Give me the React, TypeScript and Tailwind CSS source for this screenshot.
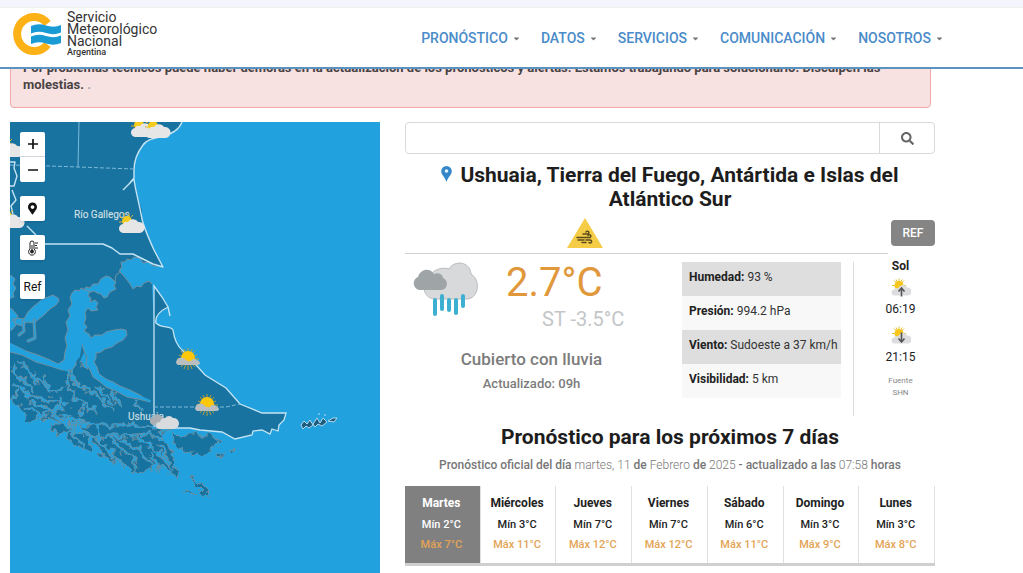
import type { FC, PropsWithChildren } from "react";
import { FaCaretDown, FaMapMarkerAlt, FaSearch } from "react-icons/fa";

type IconProps = { className?: string };
type Place = { x: number; y: number };

const menu = ["PRONÓSTICO", "DATOS", "SERVICIOS", "COMUNICACIÓN", "NOSOTROS"];

const conditions = [
  { label: "Humedad:", value: "93 %" },
  { label: "Presión:", value: "994.2 hPa" },
  { label: "Viento:", value: "Sudoeste a 37 km/h" },
  { label: "Visibilidad:", value: "5 km" },
];

const week = [
  { day: "Martes", min: 2, max: 7 },
  { day: "Miércoles", min: 3, max: 11 },
  { day: "Jueves", min: 7, max: 12 },
  { day: "Viernes", min: 7, max: 12 },
  { day: "Sábado", min: 6, max: 11 },
  { day: "Domingo", min: 3, max: 9 },
  { day: "Lunes", min: 3, max: 8 },
];

const App = () => (
  <div className="flex min-h-screen flex-col bg-white font-['Roboto','Liberation_Sans',sans-serif] text-[#222]">
    <SiteHeader />
    <main className="flex flex-1 flex-col pt-[46px] pr-[88px] pl-[10px]">
      <div
        role="alert"
        className="mr-1 rounded-sm border border-[#eda9a9] bg-[#f7e1e1] px-3 pt-3 pb-[14px] text-[13px] leading-[17px] font-bold text-[#4a4344]"
      >
        Por problemas técnicos puede haber demoras en la actualización de los
        pronósticos y alertas. Estamos trabajando para solucionarlo. Disculpen
        las molestias. <span className="text-gray-400">.</span>
      </div>
      <div className="mt-[14px] grid flex-1 grid-cols-[37fr_53fr] gap-[25px]">
        <MapPanel />
        <section>
          <SearchBar />
          <CurrentWeather />
          <Forecast />
        </section>
      </div>
    </main>
  </div>
);

const SiteHeader = () => (
  <header className="fixed inset-x-0 top-0 z-10 border-b-2 border-[#5b92bf] bg-white">
    <div className="h-2 border-b border-[#eef0ea] bg-[#f4f4fd]" />
    <div className="flex h-[59px] items-center justify-between pr-20 pl-[11px]">
      <a href="#inicio" className="flex items-center gap-[5px] pb-2">
        <Logo className="h-[44px] w-[51px]" />
        <span className="flex flex-col text-[14px] leading-[12px] text-[#333]">
          <span>Servicio</span>
          <span>Meteorológico</span>
          <span>Nacional</span>
          <span className="text-[9px] leading-[10px] font-medium">
            Argentina
          </span>
        </span>
      </a>
      <nav className="flex gap-[21px] pt-[2px]">
        {menu.map((item) => (
          <button
            key={item}
            className="flex items-center gap-[5px] text-[14px] font-medium text-[#4a8bc9]"
          >
            {item}
            <FaCaretDown className="h-[9px] w-[7px] text-[#777]" />
          </button>
        ))}
      </nav>
    </div>
  </header>
);

const SearchBar = () => (
  <form className="flex h-8 rounded-sm border border-[#d9d9d9]">
    <input
      type="search"
      aria-label="Buscar localidad"
      className="min-w-0 flex-1 px-3 text-sm outline-none"
    />
    <button
      type="button"
      aria-label="Buscar"
      className="flex w-[55px] items-center justify-center border-l border-[#d9d9d9] text-[#666]"
    >
      <FaSearch className="h-[13px] w-[13px]" />
    </button>
  </form>
);

const CurrentWeather = () => (
  <>
    <h1 className="mt-[9px] px-6 text-center text-[21px] leading-6 font-bold text-[#1d1d1d]">
      <MarkerIcon className="mr-2 mb-1 inline-block h-4 w-[11px]" />
      Ushuaia, Tierra del Fuego, Antártida e Islas del Atlántico Sur
    </h1>
    <div className="mt-[7px] flex gap-[3px]">
      <div className="h-9 flex-1 border-b border-[#d2d2d2] pr-[124px]">
        <WarningIcon className="mx-auto h-[30px] w-[36px]" />
      </div>
      <button className="mt-[2px] h-[26px] w-[44px] rounded-sm bg-[#858585] text-xs font-medium text-white">
        REF
      </button>
    </div>
    <div className="flex">
      <div className="flex-1 pt-2">
        <div className="flex pl-2">
          <RainIcon className="h-[56px] w-[66px]" />
          <div className="ml-[27px]">
            <p className="pt-px text-[40px] leading-[40px] text-[#e0983a]">
              2.7°C
            </p>
            <p className="pt-1 pl-9 text-[20px] leading-6 text-[#c3c6c8]">
              ST -3.5°C
            </p>
          </div>
        </div>
        <p className="mt-4 pr-6 text-center text-[17px] leading-6 font-medium text-[#7c7c7c]">
          Cubierto con lluvia
        </p>
        <p className="mt-[3px] pr-6 text-center text-[13px] leading-5 font-medium text-[#7c7c7c]">
          Actualizado: 09h
        </p>
      </div>
      <table className="mt-2 mr-3 block w-[159px] self-start text-xs">
        <tbody className="block">
          {conditions.map(({ label, value }) => (
            <tr
              key={label}
              className="flex h-[34px] gap-[3px] pt-[7px] pl-[7px] odd:bg-[#dedede] even:bg-[#f8f8f8]"
            >
              <th scope="row" className="font-bold">
                {label}
              </th>
              <td className="whitespace-nowrap text-[#333]">{value}</td>
            </tr>
          ))}
        </tbody>
      </table>
      <div className="mt-2 h-[154px] w-[82px] border-l border-[#dadada] pl-3 text-center text-xs">
        <div className="-mt-1 flex flex-col items-center">
          <strong className="leading-4">Sol</strong>
          <SunTimeIcon className="mt-1 h-[21px] w-[20px]" up />
          <time className="leading-5">06:19</time>
          <SunTimeIcon className="mt-[7px] h-[21px] w-[20px]" />
          <time className="leading-5">21:15</time>
          <small className="mt-2 text-[8px] leading-3 text-[#888]">
            Fuente
            <br />
            SHN
          </small>
        </div>
      </div>
    </div>
  </>
);

const Forecast = () => (
  <>
    <h2 className="mt-[7px] text-center text-[21px] leading-7 font-bold text-[#1d1d1d]">
      Pronóstico para los próximos 7 días
    </h2>
    <p className="mt-1 text-center text-xs leading-5 font-light text-[#777]">
      <b className="font-medium">Pronóstico oficial del día</b> martes, 11{" "}
      <b className="font-medium">de</b> Febrero{" "}
      <b className="font-medium">de</b> 2025{" "}
      <b className="font-medium">- actualizado a las</b> 07:58{" "}
      <b className="font-medium">horas</b>
    </p>
    <div
      role="tablist"
      className="mt-[11px] grid grid-cols-7 border-b-[3px] border-[#cfcfcf]"
    >
      {week.map(({ day, min, max }, i) => (
        <button
          key={day}
          role="tab"
          aria-selected={i === 0}
          className="flex h-[77px] flex-col items-center border-r border-[#e0e0e0] pt-[7px] pr-[2px] text-[11px] font-medium text-[#222] aria-selected:bg-[#808080] aria-selected:text-white"
        >
          <span className="text-xs leading-5 font-bold">{day}</span>
          <span className="mt-[2px] leading-5">Mín {min}°C</span>
          <span className="leading-5 text-[#e3a356]">Máx {max}°C</span>
        </button>
      ))}
    </div>
  </>
);

const MapPanel = () => (
  <div className="relative overflow-hidden bg-[#22a1df]">
    <RegionMap />
    <div className="absolute top-[10px] left-[10px] flex flex-col gap-[14px]">
      <div className="flex flex-col divide-y divide-gray-300 overflow-hidden rounded-xs bg-white">
        <button aria-label="Acercar" className="flex size-[25px] items-center justify-center">
          <svg viewBox="0 0 10 10" className="size-[10px]">
            <path d="M0 5H10M5 0V10" stroke="#111" strokeWidth="1.7" />
          </svg>
        </button>
        <button aria-label="Alejar" className="flex size-[25px] items-center justify-center">
          <svg viewBox="0 0 10 10" className="size-[10px]">
            <path d="M0 5H10" stroke="#111" strokeWidth="1.7" />
          </svg>
        </button>
      </div>
      <MapButton label="Mi ubicación">
        <FaMapMarkerAlt className="h-[13px] w-[9px]" />
      </MapButton>
      <MapButton label="Temperatura">
        <svg viewBox="0 0 12 16" className="h-4 w-3" fill="none" stroke="#222">
          <path d="M3 9V3a2 2 0 0 1 4 0v6a3.4 3.4 0 1 1-4 0Z" />
          <path d="M5 5v7M8 3h3M8 5.500h2M8 8h3" />
          <circle cx="5" cy="11.500" r="1.500" fill="#222" />
        </svg>
      </MapButton>
      <MapButton label="Referencias">Ref</MapButton>
    </div>
  </div>
);

const MapButton: FC<PropsWithChildren<{ label: string }>> = ({
  label,
  children,
}) => (
  <button
    aria-label={label}
    className="flex size-[25px] items-center justify-center rounded-xs bg-white text-xs text-[#111] shadow"
  >
    {children}
  </button>
);

// Inlets of the western channels, drawn over the land
const channels = [
  "M8 344 36 359 66 369 78 356 81 338 79 322 80 303 80 293",
  "M88 340 90 362 99 376 118 388 150 401",
];
const fjords =
  "M66 370 68 384 76 400 88 405 96 414M70 374 78 386 92 393 104 400 112 410M96 388 108 396 114 404M112 392 120 406M136 398 140 408M20 362 30 374 42 384 52 394M12 366 22 380 34 390M34 372 36 384M44 376 48 390 62 388M12 384 28 394 50 402 68 404M18 392 12 400M60 396 62 408 48 412 36 420M30 402 50 410 64 420 86 424 104 426 124 424 150 428 172 428M52 416 70 416M70 424 76 434 98 436 124 436 146 434 164 440M84 406 80 418M96 424 100 444 112 452M110 436 120 448 132 458M122 440 140 450 152 464M138 438 156 450 166 462M150 452 160 470M104 446 124 466M134 456 136 470M28 408 40 416M72 434 84 446M160 444 172 470";

const WaterLines: FC<{ d: string; width: number }> = ({ d, width }) => (
  <>
    <path d={d} stroke="#6f8f9f" strokeWidth={width + 1.6} />
    <path d={d} stroke="#22a1df" strokeWidth={width} />
  </>
);

const RegionMap = () => (
  <svg
    viewBox="10 122 370 451"
    preserveAspectRatio="xMinYMin slice"
    className="absolute inset-0 h-full w-full"
    role="img"
    aria-label="Mapa de Tierra del Fuego"
  >
    <defs>
      <filter id="coast" x="-5%" y="-5%" width="110%" height="110%">
        <feTurbulence type="fractalNoise" baseFrequency="0.13" numOctaves="2" seed="4" />
        <feDisplacementMap in="SourceGraphic" scale="13" xChannelSelector="R" yChannelSelector="G" />
      </filter>
    </defs>

    {/* fjord belt and southern islands */}
    <g filter="url(#coast)" fill="#1973a0" stroke="#6f8f9f" strokeWidth="1">
      <path d="M-4 340 66 362 170 380 170 430 160 432 174 456 179 480 168 472 158 464 150 468 138 474 126 464 112 460 100 454 92 436 78 424 58 420 42 418 28 422 23 410 12 402-4 400Z" />
      <path d="M173 434 192 436 213 436 214 448 202 457 188 453 174 446Z" />
      <path d="M50 424 62 424 74 430 62 433 51 430ZM67 434 84 434 92 444 88 450 76 446 67 441Z" />
      <path d="M189 472 196 480 204 488 212 496 204 495 196 487ZM182 492 198 494 190 497ZM214 438 222 440 220 444ZM216 452 222 453 220 458 215 457ZM230 449 236 447 234 453Z" />
      <g fill="none" strokeLinecap="round" strokeLinejoin="round">
        <WaterLines d={fjords} width={1.6} />
      </g>
    </g>

    <path
      d="M10 122H182C179 130 172 133 165 136 155 138 147 139 143 145 137 153 134 162 134 170L134 178 135 185 137 194 139 202 142 210 142 219 144 228 149 239 154 250 163 267 154 286V426H150L146 404 128 396 104 384 92 370 84 352 78 366 62 366 38 358 10 344Z"
      fill="#1973a0"
    />

    {/* strait and inland waters */}
    <g fill="#22a1df" stroke="#6f8f9f" strokeWidth="1" strokeLinejoin="round">
      <path d="M168 270 160 266 153 266 149 262 143 263 140 258 134 257 131 260 127 259 125 262 121 262 122 267 119 271 123 275 127 280 130 284 133 289 137 286 141 287 144 283 149 281 152 284 154 286 170 300Z" />
      <path d="M83 291 86 287 90 288 93 284 98 284 101 279 106 276 110 277 113 280 116 282 114 286 116 289 110 292 107 297 104 298 101 294 97 293 94 291 88 293Z" />
      <path d="M121 268 119 273 116 275 115 281" fill="none" />
      <path d="M12 320 18 318 24 319 28 312 34 306 38 303 42 299 48 297 53 295 58 298 59 301 56 305 50 309 44 315 39 319 34 323 27 322 22 326 16 324ZM4 275 12 276 15 279 13 284 16 288 13 293 14 297 4 300ZM4 306 12 309 18 316 15 321 16 325 12 330 4 330Z" />
      <g fill="none" strokeLinecap="round">
        <WaterLines d="M23 321 24 331 19 335M34 320 35 338 28 341" width={1.4} />
      </g>
      <path d="M72 293 75 290 79 291 81 288 85 290 90 291 88 296 91 298 90 302 95 300 98 303 96 307 98 310 91 311 88 308 85 312 86 318 84 323 87 327 84 331 89 334 91 338 95 335 102 335 106 332 114 330 121 329 126 330 127 335 123 340 117 343 112 347 105 349 101 352 96 353 96 358 94 362 97 367 99 374 106 379 113 382 120 386 130 390 140 395 150 402 138 399 127 397 116 391 106 387 99 381 93 377 90 370 86 364 87 357 84 351 82 344 78 348 79 355 76 359 76 365 72 370 62 370 50 366 36 362 22 355 2 350 2 340 18 347 26 351 38 355 50 360 58 364 64 360 65 352 67 346 65 338 68 330 66 322 70 316 68 310 72 304 70 298Z" />
    </g>
    <g fill="none" stroke="#22a1df" strokeWidth="4" strokeLinecap="round">
      <path d={channels[0]} />
      <path d={channels[1]} strokeWidth="2" />
    </g>
    <path d="M160 262 152 284 154 330H180V262Z" fill="#22a1df" />
    <path
      d="M154 286 162 297 168 307C158 312 155 318 156 323 162 329 170 325 173 330 174 338 176 345 183 351L189 357 197 366 205 375 226 388 240 404 262 413 286 413 284 420 279 425 278 431 272 429 270 434 262 430 253 431 252 435 235 439 222 432 200 430 190 428 175 428 154 426Z"
      fill="#1973a0"
      stroke="#c4e4f4"
      strokeWidth="1.3"
    />

    {/* coast and political borders */}
    <path d="M154 250 163 267 153 264 143 259 133 254Z" fill="#1973a0" />
    <g fill="none" stroke="#c4e4f4" strokeWidth="1.400" strokeLinejoin="round">
      <path d="M182 122C179 130 172 133 165 136 155 138 147 139 143 145 137 153 134 162 134 170V178L129 184 123 190M129 184 134 179C135 189 139 202 142 219 144 228 149 239 154 250L163 267 153 264 143 259 133 254H120L112 248 103 244H40" />
      <path d="M168 307 170 316" />
      <path d="M10 162 15 162 14 168 17 176 14 186H10M12 190 16 200 11 206 13 214M27 226 36 235" />
      <path d="M154 423 160 427H175" />
    </g>
    <g fill="none" stroke="#7db9d8" strokeWidth="1">
      <path d="M79 122 78 167" />
      <path d="M10 165 50 166 134 169M154 407H226L240 404" strokeDasharray="4 2" />
    </g>
    <g fill="#1d5c7d" stroke="#c4e4f4" strokeWidth="0.900">
      <path d="M301 425 304 421 307 424 310 420 313 425 309 428 306 426 303 429ZM313 424 317 418 320 423 323 418 327 422 322 426 318 424 315 427ZM328 421 333 418 337 418 334 422ZM318 414h2M324 415h2" />
    </g>

    <g fill="#d2e4ec" stroke="#46809f" strokeWidth="0.500" paintOrder="stroke" className="text-[10px]">
      <text x="74" y="218">Río Gallegos</text>
      <text x="128" y="420">Ushuaia</text>
    </g>

    <PartlyCloudy x={131} y={119} />
    <PartlyCloudy x={145} y={120} />
    <PartlyCloudy x={-2} y={139} />
    <PartlyCloudy x={-1} y={210} />
    <PartlyCloudy x={119} y={215} />
    <MostlySunny x={175} y={349} />
    <MostlySunny x={194} y={395} />
    <g transform="translate(151 414)">
      <path d="M4 11a4 4 0 0 1-2-8 5 5 0 0 1 9 0l3 8Z" fill="#aab0b3" />
      <path d="M8 15a3 3 0 0 1 1-7 5 5 0 0 1 5-4 5 5 0 0 1 8 0 5 5 0 0 1 1 11Z" fill="#d9dcdf" />
      <path d="M12 15v3M15 15v2M18 15v3" stroke="#35aacd" />
    </g>
  </svg>
);

const CLOUD = "M5 18a4 4 0 0 1-1-9 4 4 0 0 1 5-2 6 6 0 0 1 10 0 5 5 0 0 1 2 11Z";

const PartlyCloudy: FC<Place> = ({ x, y }) => (
  <g transform={`translate(${x} ${y})`}>
    <circle cx="8" cy="6" r="5" fill="#f7cb1c" />
    <path d="m1 2 2 1M5-2v3M10-1v2M0 7h3M14 0l-2 2" stroke="#d9b32b" />
    <path d={CLOUD} fill="#e6e6e6" />
  </g>
);

const SUN_RAYS =
  "M13-1v22M2 10h22M6 2l14 16M20 2 6 18M9 0l8 20M17 0 9 20M4 6l18 8M22 6 4 14";

const MostlySunny: FC<Place> = ({ x, y }) => (
  <g transform={`translate(${x} ${y})`}>
    <path d={SUN_RAYS} stroke="#c2a52c" strokeWidth="0.900" />
    <circle cx="13" cy="9" r="7" fill="#fdc80b" />
    <path d="M3 16a3 3 0 0 1-1-5 5 5 0 0 1 8-1q2 3 6 2a4 4 0 0 1 6-1q3 1 3 4l-2 1Z" fill="#b9bfc0" />
  </g>
);

const Logo: FC<IconProps> = ({ className }) => (
  <svg viewBox="0 0 51 44" className={className} aria-hidden="true">
    <path d="M36.500 11.500A17 17 0 1 0 36.500 32.500" fill="none" stroke="#fcb116" strokeWidth="8" />
    <path d="M20 14q7-3 15-.5t15-.5v7.500q-7 3-15 .5t-15 .5ZM20 24.500q7-3 15-.5t15-.5v7.500q-7 3-15 .5t-15 .5Z" fill="#1a9bd3" />
  </svg>
);

const MarkerIcon: FC<IconProps> = ({ className }) => (
  <svg viewBox="0 0 11 16" className={className} aria-hidden="true">
    <path d="M5.500 0A5.300 5.300 0 0 0 .2 5.300C.2 9 4 11 5.500 16 7 11 10.800 9 10.800 5.300A5.300 5.300 0 0 0 5.500 0Z" fill="#3488c9" />
    <circle cx="5.500" cy="5" r="1.800" fill="#e8f3fa" />
  </svg>
);

const WarningIcon: FC<IconProps> = ({ className }) => (
  <svg viewBox="0 0 36 30" className={className} role="img" aria-label="Alerta por viento">
    <path d="M18 0 36 30H0Z" fill="#f5cc45" />
    <g fill="none" stroke="#5b4b1e" strokeWidth="1.500" strokeLinecap="round">
      <path d="M16 16h5a1.500 1.500 0 1 0-2-2M10 19.500h13a1.500 1.500 0 1 0-2-2M11 22h6M19 22h4a1.500 1.500 0 1 1-1 2.500M15 24.500h4" />
    </g>
  </svg>
);

const RainIcon: FC<IconProps> = ({ className }) => (
  <svg viewBox="0 0 66 56" className={className} role="img" aria-label="Cubierto con lluvia">
    <path d="M23 37C13 37 8 28 14 20 16 10 26 4 36 7 41-2 57-1 58 12 68 18 66 36 54 37Z" fill="#d8d9da" stroke="#b9bbbc" />
    <path d="M7 28C-1 27-1 17 5 15 7 7 17 5 21 12 26 10 30 13 30 16 36 18 35 28 28 28Z" fill="#9fa4a6" />
    <path d="M22 38V52M29 34V47M36 38V48M43 38V51M50 34V44" stroke="#3db0d2" strokeWidth="4" strokeLinecap="round" />
  </svg>
);

const SunTimeIcon: FC<IconProps & { up?: boolean }> = ({ className, up }) => (
  <svg viewBox="0 0 20 20" className={className} aria-hidden="true">
    <path d="M8 0v14M1 7h14M3 2l10 10M13 2 3 12M5 1l6 12M11 1 5 13" stroke="#e5c033" />
    <circle cx="8" cy="7" r="4.500" fill="#f9c51b" />
    <path d="M4 17a3 3 0 0 1-1-6 3 3 0 0 1 4-1 5 5 0 0 1 9-1 4 4 0 0 1 1 8Z" fill="#dddddf" />
    <path
      d={up ? "M10.500 18V10M7.500 13l3-3.500 3 3.500" : "M10.500 6v9M7.500 12l3 3.500 3-3.500"}
      fill="none"
      stroke="#555"
      strokeWidth="1.600"
    />
  </svg>
);

export default App;
